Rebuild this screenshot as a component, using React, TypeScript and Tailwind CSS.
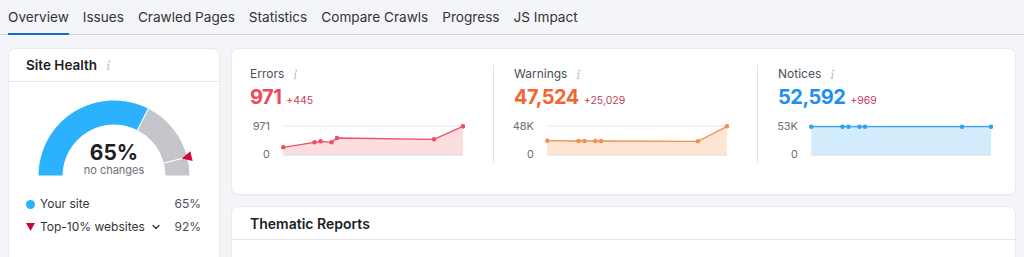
import React from "react";
import { ChevronDown } from "lucide-react";

const tabs = ["Overview", "Issues", "Crawled Pages", "Statistics", "Compare Crawls", "Progress", "JS Impact"];

// shared x positions of the crawl points inside the 184px chart
const xs = [2.3, 33.5, 39.5, 50.5, 56, 153, 182];

interface Metric {
  label: string;
  value: string;
  delta: string;
  valueColor: string;
  line: string;
  fill: string;
  top: string;
  ys: number[];
}

const metrics: Metric[] = [
  {
    label: "Errors",
    value: "971",
    delta: "+445",
    valueColor: "text-[#f0475c]",
    line: "#ef4f63",
    fill: "#fcdde1",
    top: "971",
    ys: [28.3, 23.3, 22.3, 23.3, 19, 20.3, 7.3],
  },
  {
    label: "Warnings",
    value: "47,524",
    delta: "+25,029",
    valueColor: "text-[#f4652f]",
    line: "#f3904f",
    fill: "#fde6d3",
    top: "48K",
    ys: [21.7, 22, 22, 22, 22, 22.3, 7.3],
  },
  {
    label: "Notices",
    value: "52,592",
    delta: "+969",
    valueColor: "text-[#1e90f2]",
    line: "#2da5ee",
    fill: "#d3ecfc",
    top: "53K",
    ys: [7.7, 7.7, 7.7, 7.7, 7.7, 7.7, 7.7],
  },
];

const InfoIcon = () => (
  <svg width="6" height="11" viewBox="0 0 6 11" className="shrink-0">
    <circle cx="4.3" cy="1.4" r="1" fill="#b9bcc4" />
    <path d="M2.2 4.2 H3.9 L2.7 9.6 M1.6 9.6 H4.2" stroke="#b9bcc4" strokeWidth="1" fill="none" />
  </svg>
);

const MiniChart = ({ m }: { m: Metric }) => {
  const pts = xs.map((x, i) => `${x},${m.ys[i]}`).join(" ");
  const area = `${xs[0]},36 ${pts} ${xs[xs.length - 1]},36`;
  return (
    <div className="flex mt-[8px]">
      <div className="w-[20px] h-[42px] flex flex-col justify-between items-end text-[11px] leading-[14px] text-[#6c6e79]">
        <span>{m.top}</span>
        <span>0</span>
      </div>
      <svg width="184" height="40" viewBox="0 0 184 40" className="ml-[11px]">
        <line x1="2" y1="7" x2="182" y2="7" stroke="#e6e7eb" strokeWidth="1" />
        <polygon points={area} fill={m.fill} />
        <line x1="2" y1="36" x2="182" y2="36" stroke="#dadbe0" strokeWidth="1" />
        <polyline points={pts} fill="none" stroke={m.line} strokeWidth="1.3" />
        {xs.map((x, i) => (
          <circle key={i} cx={x} cy={m.ys[i]} r="2.3" fill={m.line} />
        ))}
      </svg>
    </div>
  );
};

const MetricColumn = ({ m }: { m: Metric }) => (
  <div className="h-[97px]">
    <div className="flex items-center gap-[8px] h-[18px] text-[12px] text-[#4d4f59]">
      {m.label}
      <InfoIcon />
    </div>
    <div className="flex items-baseline h-[28px]">
      <span className={`text-[20px] leading-[28px] font-bold tracking-[-0.5px] ${m.valueColor}`}>{m.value}</span>
      <span className="ml-[5px] text-[10.5px] text-[#c63b5e]">{m.delta}</span>
    </div>
    <MiniChart m={m} />
  </div>
);

const Gauge = () => (
  <div className="relative w-[160px] h-[82px] mx-auto mt-[15px]">
    <svg width="160" height="82" viewBox="0 0 160 82" className="overflow-visible">
      <path d="M4 79 A76 76 0 0 1 114.5 11.3 L103.15 33.56 A51 51 0 0 0 29 79 Z" fill="#2cb1fc" stroke="#fff" strokeWidth="1" />
      <path d="M114.5 11.3 A76 76 0 0 1 153.6 60.1 L129.4 66.3 A51 51 0 0 0 103.15 33.56 Z" fill="#c5c6cb" stroke="#fff" strokeWidth="1" />
      <path d="M153.6 60.1 A76 76 0 0 1 156 79 L131 79 A51 51 0 0 0 129.4 66.3 Z" fill="#c5c6cb" stroke="#fff" strokeWidth="1" />
      <polygon points="147.8,61.6 158.7,63.9 156.3,54.3" fill="#d10a3f" />
    </svg>
    <div className="absolute left-0 right-0 top-[47px] text-center">
      <div className="text-[21px] leading-[18px] font-bold text-[#1d1e24]">65%</div>
      <div className="text-[11px] leading-[10px] text-[#6c6e79] pt-[3px]">no changes</div>
    </div>
  </div>
);

export default function App() {
  return (
    <div className="w-[1024px] h-[257px] overflow-hidden bg-[#f4f5f9] font-['Inter',sans-serif] text-[#333]">
      <nav className="flex gap-[14px] px-[8px] h-[35px] border-b border-[#d3d5db]">
        {tabs.map((t, i) => (
          <div
            key={t}
            className={`h-[35px] -mb-px pt-[2px] flex items-center text-[13.6px] border-b-2 ${
              i === 0 ? "border-[#1a6dca]" : "border-transparent"
            }`}
          >
            {t}
          </div>
        ))}
      </nav>

      <div className="flex gap-[13px] px-[9px] pt-[14px]">
        {/* Site health */}
        <div className="w-[210px] h-[240px] shrink-0 bg-white rounded-md shadow-[0_0_0_1px_#e9eaee,0_1px_2px_rgba(0,0,0,0.05)]">
          <div className="h-[33px] flex items-center gap-[8px] px-[17px] border-b border-[#e6e7eb]">
            <span className="text-[13.5px] font-semibold text-[#1d1e24]">Site Health</span>
            <InfoIcon />
          </div>
          <Gauge />
          <div className="mt-[15px] pl-[17px] pr-[18px] text-[12px] text-[#333]">
            <div className="flex items-center h-[20px]">
              <span className="w-[9px] h-[9px] rounded-full bg-[#2cb1fc]" />
              <span className="ml-[5px]">Your site</span>
              <span className="ml-auto text-[#4d4f59]">65%</span>
            </div>
            <div className="flex items-center h-[20px] mt-[3px]">
              <svg width="9" height="8" viewBox="0 0 9 8">
                <polygon points="0,0 9,0 4.5,8" fill="#c8083a" />
              </svg>
              <span className="ml-[5px]">Top-10% websites</span>
              <ChevronDown size={12} strokeWidth={2.5} className="ml-[5px] text-[#333]" />
              <span className="ml-auto text-[#4d4f59]">92%</span>
            </div>
          </div>
        </div>

        <div className="flex-1 flex flex-col gap-[13px]">
          {/* Issues summary */}
          <div className="h-[145px] bg-white rounded-md shadow-[0_0_0_1px_#e9eaee,0_1px_2px_rgba(0,0,0,0.05)] px-[18px] pt-[16px] flex">
            <div className="w-[243px] shrink-0">
              <MetricColumn m={metrics[0]} />
            </div>
            <div className="w-[264px] shrink-0 border-l border-[#e0e1e6] pl-[20px] h-[97px]">
              <MetricColumn m={metrics[1]} />
            </div>
            <div className="flex-1 border-l border-[#e0e1e6] pl-[20px] h-[97px]">
              <MetricColumn m={metrics[2]} />
            </div>
          </div>

          {/* Thematic reports */}
          <div className="h-[100px] bg-white rounded-md shadow-[0_0_0_1px_#e9eaee,0_1px_2px_rgba(0,0,0,0.05)]">
            <div className="h-[33px] flex items-center px-[18px] border-b border-[#e6e7eb]">
              <span className="text-[14px] font-semibold text-[#1d1e24]">Thematic Reports</span>
            </div>
          </div>
        </div>
      </div>
    </div>
  );
}
